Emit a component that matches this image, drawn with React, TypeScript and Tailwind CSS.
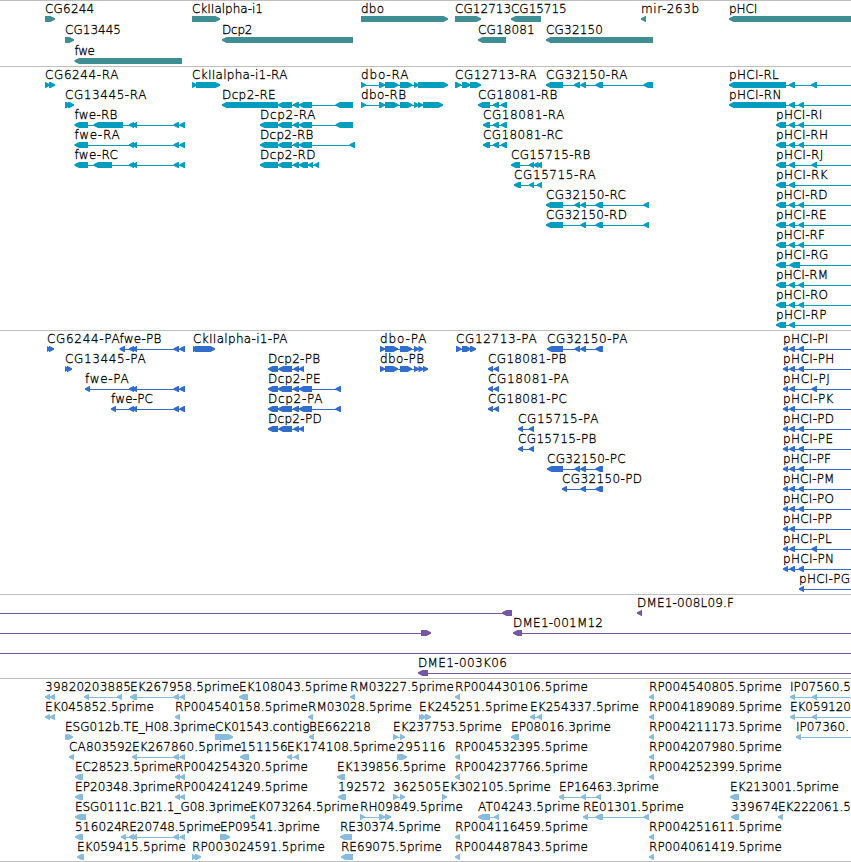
import React from "react";

type Span = [number, number];
// row, label x, label, label end, strand, blocks, optional extent of the connecting line
type Feature = [number, number, string, number, "L" | "R", Span[], Span?];

interface Track {
  name: string;
  color: string;
  height: number;
  step: number;
  features: Feature[];
}

const EDGE = 860;
const fweTail: Span[] = [[129, 134], [132, 137], [173.5, 179], [179.5, 185]];
const dcpBody: Span[] = [[278, 292], [293, 299], [299, 312]];
const dboHead: Span[] = [[361, 366], [379, 385], [385, 398.5], [400, 412.5], [414, 419]];
const cg18081: Span[] = [[483, 490], [493, 499], [501, 507]];
const H2: Span[] = [[776, 786], [789, 795]];
const H3: Span[] = [...H2, [798.5, 804]];
const P2: Span[] = [[783, 788], [789.5, 795]];
const P3: Span[] = [...P2, [798.5, 804]];
const tail: Span[] = [[173.5, 179], [180, 185]];

const hr = (row: number, label: string, end: number, blocks: Span[]): Feature => [row, 776, label, end, "L", blocks, [776, EDGE]];
const hp = (row: number, label: string, end: number, blocks: Span[]): Feature => [row, 783, label, end, "L", blocks, [783, EDGE]];
const rp = (row: number, x: number, label: string): Feature => [row, x, label, x + 132.3, "L", [[x, x + 5]]];

const tracks: Track[] = [
  {
    name: "genes",
    color: "#408e93",
    height: 66,
    step: 21,
    features: [
      [0, 45, "CG6244", 93.5, "R", [[45, 55]]],
      [0, 192, "CkIIalpha-i1", 262.3, "R", [[192, 220]]],
      [0, 361, "dbo", 383.3, "R", [[361, 448]]],
      [0, 455, "CG12713", 510.5, "R", [[455, 481]]],
      [0, 511, "CG15715", 566, "L", [[511, 541]]],
      [0, 641, "mir-263b", 698.3, "L", [[641, 646]]],
      [0, 729, "pHCI", 756.7, "L", [[729, EDGE]]],
      [1, 65, "CG13445", 120.3, "R", [[65, 74]]],
      [1, 222, "Dcp2", 251.7, "L", [[222, 353]]],
      [1, 478, "CG18081", 534, "L", [[478, 506]]],
      [1, 546, "CG32150", 602.3, "L", [[546, 653]]],
      [2, 74.5, "fwe", 94.3, "L", [[74.5, 182]]],
    ],
  },
  {
    name: "transcripts",
    color: "#009dbf",
    height: 264,
    step: 20,
    features: [
      [0, 45, "CG6244-RA", 117.7, "R", [[45, 50], [49, 55]]],
      [0, 192, "CkIIalpha-i1-RA", 286.7, "R", [[192, 197], [196, 220]]],
      [0, 361, "dbo-RA", 407.7, "R", [...dboHead, [418, 448]]],
      [0, 455, "CG12713-RA", 535.7, "R", [[455, 461], [462, 470.5], [470, 481]]],
      [0, 546, "CG32150-RA", 626.7, "L", [[546, 563], [574, 580], [580.5, 586], [595.5, 603], [643.5, 653]]],
      [0, 729, "pHCI-RL", 778, "L", [[729, 786], [789, 795], [811, 817]], [729, EDGE]],
      [1, 65, "CG13445-RA", 145.7, "R", [[65, 71], [68, 74]]],
      [1, 222, "Dcp2-RE", 275, "L", [[222, 278], ...dcpBody, [335.5, 353]]],
      [1, 361, "dbo-RB", 405.3, "R", [...dboHead, [418, 423], [423, 443]]],
      [1, 478, "CG18081-RB", 556.7, "L", [[478, 490], [493, 499], [501, 507]]],
      [1, 729, "pHCI-RN", 780.7, "L", [[729, 786], [789, 795], [798.5, 804]], [729, EDGE]],
      [2, 74.5, "fwe-RB", 116.7, "L", [[74.5, 88], [93.5, 123], ...fweTail]],
      [2, 260, "Dcp2-RA", 314.7, "L", [[260, 278], ...dcpBody, [335.5, 353]]],
      [2, 483, "CG18081-RA", 563.7, "L", cg18081],
      [3, 74.5, "fwe-RA", 119, "L", [[74.5, 88], ...fweTail]],
      [3, 260, "Dcp2-RB", 312.7, "L", [[260, 278], ...dcpBody, [349.5, 355]]],
      [3, 483, "CG18081-RC", 562.3, "L", cg18081],
      [4, 74.5, "fwe-RC", 117.3, "L", [[74.5, 88], [93.5, 112], ...fweTail]],
      [4, 260, "Dcp2-RD", 314.7, "L", [[260, 278], [278, 292], [293, 299], [299, 308], [308, 313], [314, 319]]],
      [4, 511, "CG15715-RB", 589.7, "L", [[511, 520], [529, 534], [533.5, 538.5], [537, 542]]],
      [5, 514, "CG15715-RA", 595, "L", [[514, 521], [529, 534], [537, 542]]],
      [6, 546, "CG32150-RC", 625.3, "L", [[546, 563], [574.5, 580], [580.5, 586], [595.5, 603], [643.5, 649]]],
      [7, 546, "CG32150-RD", 626.3, "L", [[546, 563], [580.5, 586], [595.5, 603], [643.5, 649]]],
      hr(2, "pHCI-RI", 821.7, H3),
      hr(3, "pHCI-RH", 827.3, H3),
      hr(4, "pHCI-RJ", 822.7, [...H2, [811.5, 817]]),
      hr(5, "pHCI-RK", 827, H2),
      hr(6, "pHCI-RD", 826.7, H3),
      hr(7, "pHCI-RE", 826, H3),
      hr(8, "pHCI-RF", 824.3, H3),
      hr(9, "pHCI-RG", 827.7, [[776, 786], [789.5, 800]]),
      hr(10, "pHCI-RM", 827.3, H3),
      hr(11, "pHCI-RO", 827.3, H3),
      hr(12, "pHCI-RP", 825.7, H2),
    ],
  },
  {
    name: "proteins",
    color: "#316dcc",
    height: 264,
    step: 20,
    features: [
      [0, 47, "CG6244-PA", 119, "R", [[47, 51], [49, 54]]],
      [0, 119.5, "fwe-PB", 160.7, "L", [[119.5, 125], ...fweTail]],
      [0, 193, "CkIIalpha-i1-PA", 286.7, "R", [[193, 198], [195, 215]]],
      [0, 380, "dbo-PA", 425.7, "R", [[380, 385], [385, 398], [400, 412], [414, 419], [418.5, 423.5]]],
      [0, 456, "CG12713-PA", 536, "R", [[456, 461.5], [462, 471], [470, 476]]],
      [0, 547, "CG32150-PA", 626.7, "L", [[547, 563], [574.5, 580], [580.5, 586], [595.5, 603]]],
      [1, 65, "CG13445-PA", 145, "R", [[65, 69], [67, 72]]],
      [1, 268, "Dcp2-PB", 319.3, "L", [[268, 278], [278.5, 292], [293.5, 299], [299, 304]]],
      [1, 380, "dbo-PB", 423.3, "R", [[380, 385], [385, 398], [400, 412], [414, 419], [418.5, 423.5], [423, 428]]],
      [1, 488, "CG18081-PB", 565.7, "L", [[488, 493], [494, 499]]],
      [2, 85, "fwe-PA", 128, "L", [[85, 90], ...fweTail]],
      [2, 268, "Dcp2-PE", 320, "L", [[268, 278], ...dcpBody, [335.5, 341]]],
      [2, 488, "CG18081-PA", 568, "L", [[488, 493], [494, 499]]],
      [3, 111, "fwe-PC", 152.3, "L", [[111, 116], ...fweTail]],
      [3, 268, "Dcp2-PA", 321.7, "L", [[268, 278], ...dcpBody, [335.5, 341]]],
      [3, 488, "CG18081-PC", 566.3, "L", [[488, 493], [494, 499]]],
      [4, 268, "Dcp2-PD", 321, "L", [[268, 278], [278.5, 292], [293.5, 299], [299, 304]]],
      [4, 518, "CG15715-PA", 597.7, "L", [[518, 523], [529, 534]]],
      [5, 518, "CG15715-PB", 595.7, "L", [[518, 523], [529, 534]]],
      [6, 547, "CG32150-PC", 625, "L", [[547, 563], [574.5, 580], [580.5, 586], [595.5, 603]]],
      [7, 562, "CG32150-PD", 641.3, "L", [[562, 567], [580.5, 586], [595.5, 603]]],
      hp(0, "pHCI-PI", 827.7, P3),
      hp(1, "pHCI-PH", 833.7, P3),
      hp(2, "pHCI-PJ", 829, [...P2, [811.5, 817]]),
      hp(3, "pHCI-PK", 832.7, P2),
      hp(4, "pHCI-PD", 833.3, P3),
      hp(5, "pHCI-PE", 832.3, P3),
      hp(6, "pHCI-PF", 830.3, P3),
      hp(7, "pHCI-PM", 833.7, P3),
      hp(8, "pHCI-PO", 833.3, P3),
      hp(9, "pHCI-PP", 831.3, P2),
      hp(10, "pHCI-PL", 831, [...P2, [811.5, 817]]),
      hp(11, "pHCI-PN", 833.3, P3),
      [12, 799, "pHCI-PG", 849.3, "L", [[799, 804]], [799, EDGE]],
    ],
  },
  {
    name: "clones",
    color: "#7657a7",
    height: 84,
    step: 20,
    features: [
      [0, 0, "", 0, "L", [[502, 512]], [-2, 512]],
      [0, 637, "DME1-008L09.F", 733.3, "L", [[637, 642]]],
      [1, 0, "", 0, "R", [[421, 431]], [-2, 431]],
      [1, 513, "DME1-001M12", 602.3, "L", [[513, 522]], [513, EDGE]],
      [2, 0, "", 0, "L", [], [-2, EDGE]],
      [3, 418, "DME1-003K06", 506.3, "L", [[418, 428]], [418, EDGE]],
    ],
  },
  {
    name: "ests",
    color: "#88bcdd",
    height: 183,
    step: 20,
    features: [
      [0, 45, "39820", 83.5, "L", [[45, 50], [50, 55]]],
      [0, 84, "203885", 130.3, "L", [[84, 89], [117, 122]]],
      [0, 130, "EK267958.5prime", 238.7, "L", [[130, 137], ...tail]],
      [0, 239, "EK108043.5prime", 347, "L", [[239, 248]]],
      [0, 350, "RM03227.5prime", 453.3, "L", [[350, 355]]],
      rp(0, 455, "RP004430106.5prime"),
      rp(0, 649, "RP004540805.5prime"),
      [0, 790, "IP07560.5", 850.2, "L", [[790, 795], [812, 817]], [790, EDGE]],
      [1, 45, "EK045852.5prime", 153.3, "L", [[45, 50], [50, 55]]],
      rp(1, 175, "RP004540158.5prime"),
      [1, 308, "RM03028.5prime", 411.3, "L", [[308, 313]]],
      [1, 419, "EK245251.5prime", 527.3, "R", [[419, 423], [421, 426], [425, 431]]],
      [1, 530, "EK254337.5prime", 638.3, "L", [[530, 535], [537, 542]]],
      rp(1, 649, "RP004189089.5prime"),
      [1, 790, "EK059120", 850.2, "L", [[790, 795], [812, 817]], [790, EDGE]],
      [2, 65, "ESG012b.TE_H08.3prime", 214.7, "R", [[65, 70], [67, 73]]],
      [2, 215, "CK01543.contig", 308.7, "R", [[215, 233]]],
      [2, 309, "BE662218", 370.3, "L", [[309, 314]]],
      [2, 393, "EK237753.5prime", 501.3, "R", [[393, 398], [400, 405]]],
      [2, 511, "EP08016.3prime", 610.3, "L", [[511, 519]]],
      rp(2, 649, "RP004211173.5prime"),
      [2, 796, "IP07360.", 848.3, "L", [[796, 801]], [796, EDGE]],
      [3, 69, "CA803592", 131.7, "L", [[69, 74]]],
      [3, 132, "EK267860.5prime", 240.7, "L", [[132, 137], ...tail]],
      [3, 240, "151156", 287, "L", [[240, 249]]],
      [3, 287, "EK174108.5prime", 395.3, "L", [[287, 292], [294, 299]]],
      [3, 397, "295116", 444.7, "R", [[397, 402], [399, 407]]],
      rp(3, 455, "RP004532395.5prime"),
      rp(3, 649, "RP004207980.5prime"),
      [4, 75, "EC28523.5prime", 175.3, "L", [[75, 83]]],
      [4, 175, "RP004254320.5prime", 307.3, "L", [[175, 180], [180, 185]]],
      [4, 337, "EK139856.5prime", 445.3, "L", [[337, 345]]],
      rp(4, 455, "RP004237766.5prime"),
      rp(4, 649, "RP004252399.5prime"),
      [5, 75, "EP20348.3prime", 174.7, "L", [[75, 83]]],
      [5, 175, "RP004241249.5prime", 307.3, "L", [[175, 180], [180, 185]]],
      [5, 338, "192572", 384.7, "L", [[338, 346]]],
      [5, 393, "362505", 440.7, "R", [[393, 398], [400, 405]]],
      [5, 442, "EK302105.5prime", 550.3, "R", [[442, 447]]],
      [5, 559, "EP16463.3prime", 658.3, "L", [[559, 564], [581, 586], [596, 601]]],
      [5, 730, "EK213001.5prime", 838.3, "L", [[730, 739]]],
      [6, 75, "ESG0111c.B21.1_G08.3prime", 250.3, "L", [[75, 86]]],
      [6, 250, "EK073264.5prime", 358.3, "L", [[250, 255]]],
      [6, 360, "RH09849.5prime", 462.3, "R", [[360, 365], [379, 385], [385, 391]]],
      [6, 478, "AT04243.5prime", 579.3, "L", [[478, 490], [494, 499]]],
      [6, 583, "RE01301.5prime", 683.3, "L", [[583, 588], [595.5, 603], [643.5, 649]]],
      [6, 731, "339674", 778, "L", [[731, 739]]],
      [6, 778, "EK222061.5", 850.2, "L", [[778, 783]]],
      [7, 75, "516024", 121.3, "L", [[75, 83]]],
      [7, 121, "RE20748.5prime", 220.3, "L", [[121, 126], [129, 134], [132, 137], ...tail]],
      [7, 220, "EP09541.3prime", 319.3, "R", [[220, 230]]],
      [7, 340, "RE30374.5prime", 440.3, "L", [[340, 352]]],
      rp(7, 455, "RP004116459.5prime"),
      rp(7, 649, "RP004251611.5prime"),
      [8, 77, "EK059415.5prime", 185.3, "L", [[77, 84]]],
      [8, 192, "RP003024591.5prime", 324.3, "R", [[192, 197], [195, 201]]],
      [8, 341, "RE69075.5prime", 441.3, "L", [[341, 353]]],
      rp(8, 455, "RP004487843.5prime"),
      rp(8, 649, "RP004061419.5prime"),
    ],
  },
];

function arrow([a, b]: Span, dir: "L" | "R", y: number) {
  const head = Math.min(4.5, b - a);
  return dir === "L"
    ? `${a},${y + 2.2} ${a + head},${y} ${b},${y} ${b},${y + 6} ${a + head},${y + 6} ${a},${y + 3.8}`
    : `${b},${y + 2.2} ${b - head},${y} ${a},${y} ${a},${y + 6} ${b - head},${y + 6} ${b},${y + 3.8}`;
}

function FeatureGlyph({ feature, step, color }: { feature: Feature; step: number; color: string }) {
  const [row, x, label, end, dir, blocks, extent] = feature;
  const top = row * step;
  const from = extent ? extent[0] : blocks[0][0];
  const to = extent ? extent[1] : blocks[blocks.length - 1][1];
  const linked = extent !== undefined || blocks.length > 1;
  return (
    <g>
      {linked && <rect x={from + 1} y={top + 18} width={to - from - 2} height={1} fill={color} shapeRendering="crispEdges" />}
      {blocks.map((b, i) => (
        <polygon key={i} points={arrow(b, dir, top + 15)} fill={color} />
      ))}
      {label && (
        <text
          x={x}
          y={top + 12}
          textLength={end - x + 0.7}
          lengthAdjust="spacing"
          fill="#000"
          stroke="#000"
          strokeWidth={0.3}
        >
          {label}
        </text>
      )}
    </g>
  );
}

export default function App() {
  return (
    <main className="flex h-[862px] w-[851px] flex-col overflow-hidden bg-white">
      {tracks.map((t) => (
        <section key={t.name} className="shrink-0 overflow-hidden border-t border-[#bebebe]" style={{ height: t.height }}>
          <svg
            width={851}
            height={t.height - 1}
            className="block font-['DejaVu_Sans',sans-serif] text-[12px] font-extralight"
          >
            {t.features.map((f, i) => (
              <FeatureGlyph key={i} feature={f} step={t.step} color={t.color} />
            ))}
          </svg>
        </section>
      ))}
      <div className="h-px shrink-0 bg-[#bebebe]" />
    </main>
  );
}
